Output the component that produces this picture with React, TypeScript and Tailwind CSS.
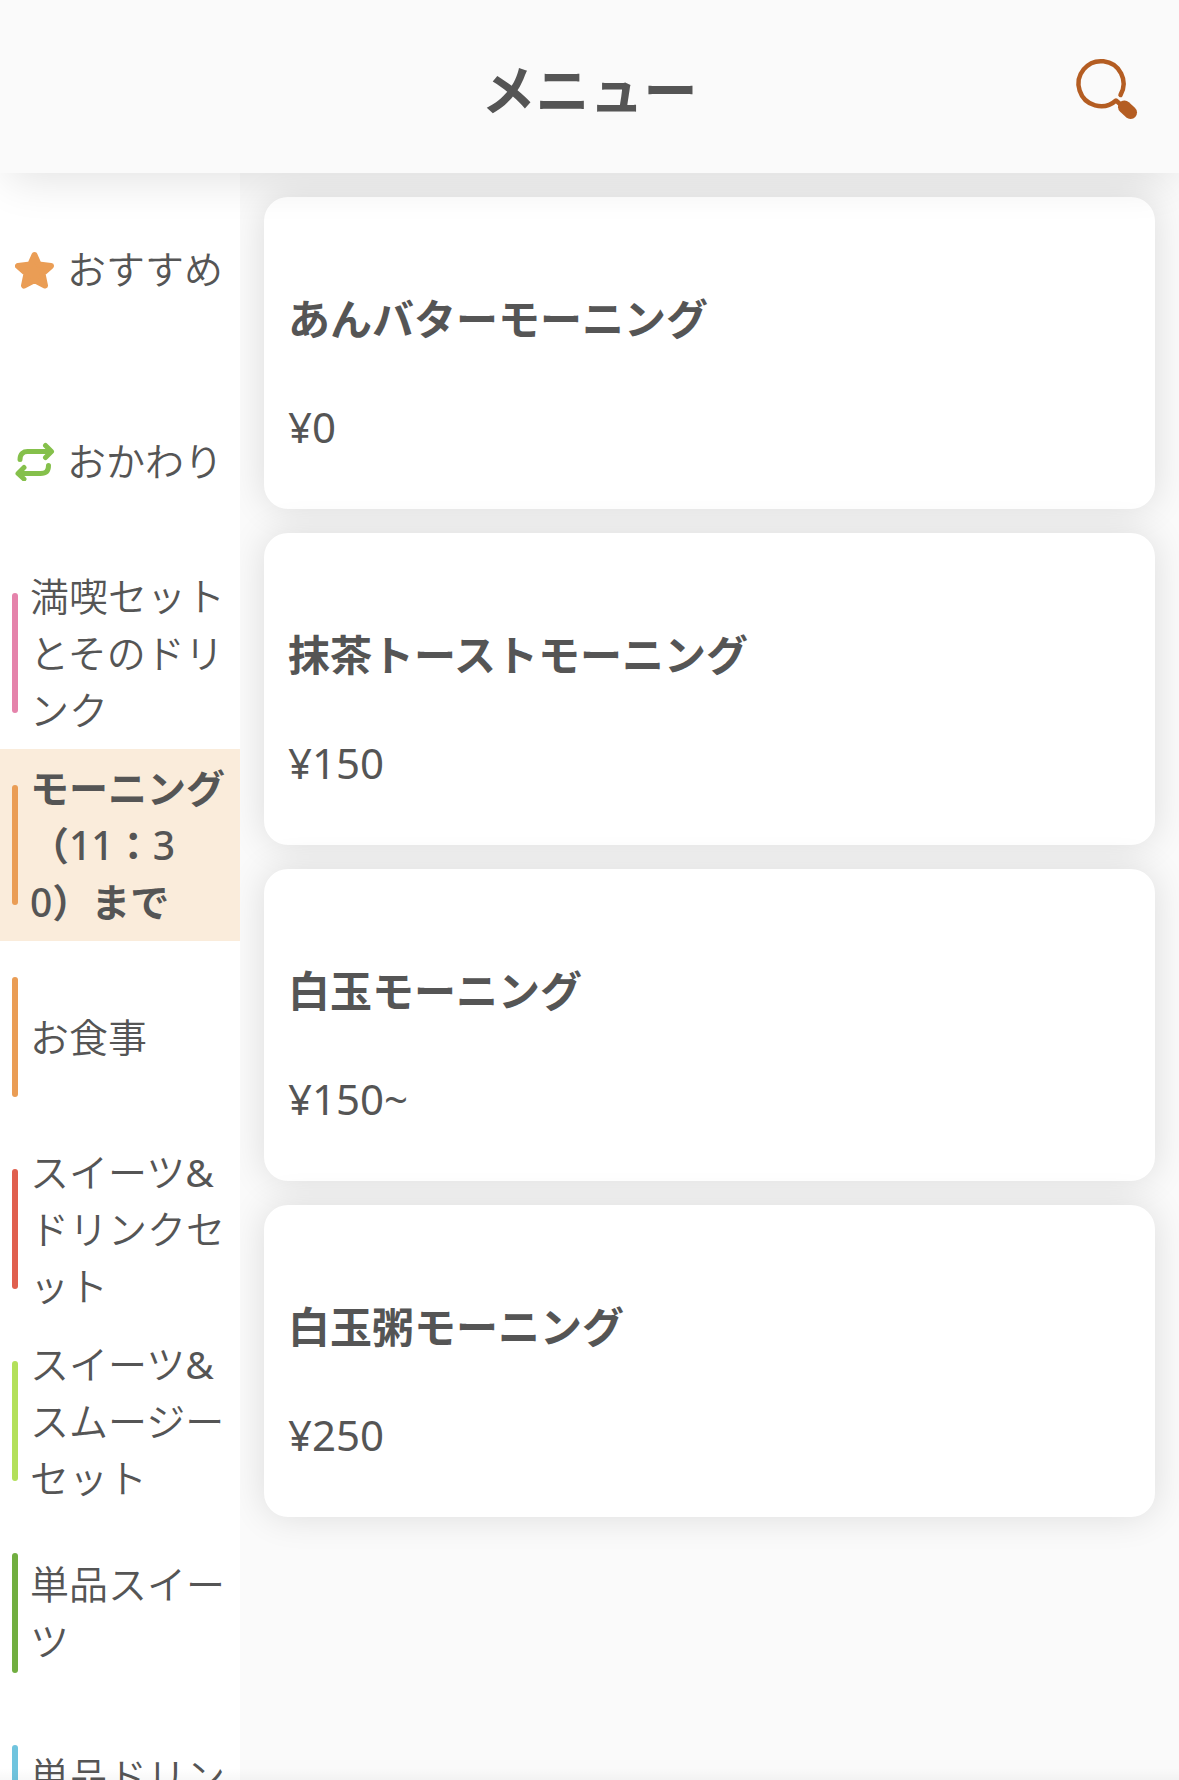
import type { ReactNode } from 'react';

const categories = [
  { name: 'おすすめ', icon: 'star' },
  { name: 'おかわり', icon: 'repeat' },
  { name: '満喫セットとそのドリンク', bar: 'bg-[#e583ab]' },
  { name: 'モーニング（11：30）まで', bar: 'bg-[#ea9d55]', active: true },
  { name: 'お食事', bar: 'bg-[#ea9d55]' },
  { name: 'スイーツ&ドリンクセット', bar: 'bg-[#e05f4e]' },
  { name: 'スイーツ&スムージーセット', bar: 'bg-[#b3e05a]' },
  { name: '単品スイーツ', bar: 'bg-[#71ae40]' },
  { name: '単品ドリンク', bar: 'bg-[#70c4de]' },
];

const items = [
  { name: 'あんバターモーニング', price: '¥0' },
  { name: '抹茶トーストモーニング', price: '¥150' },
  { name: '白玉モーニング', price: '¥150~' },
  { name: '白玉粥モーニング', price: '¥250' },
];

const icons: Record<string, ReactNode> = {
  star: (
    <svg viewBox="0 0 40 40" className="w-10 h-10 shrink-0" fill="#ea9d55" stroke="#ea9d55" strokeWidth="6" strokeLinejoin="round">
      <path d="M19.5 6 L23.700 15.500 L36 17 L27.500 24.500 L30 36.500 L19.500 31 L9 36.500 L11.500 24.500 L3 17 L15.300 15.500 Z" />
    </svg>
  ),
  repeat: (
    <svg viewBox="0 0 40 40" className="w-10 h-10 shrink-0" fill="none" stroke="#85c04b" strokeWidth="5" strokeLinecap="round" strokeLinejoin="round">
      <path d="M5 18.500 C5 12.500 8.500 10.500 12.500 10.500 H35" />
      <path d="M30.500 4.500 L36.500 10.500 L30.500 16.500" />
      <path d="M33.500 24.500 C33.500 30.500 30.500 32.500 25.500 32.500 H4.500" />
      <path d="M9 26.500 L3 32.500 L9 38" />
    </svg>
  ),
};

function SearchIcon() {
  return (
    <svg viewBox="0 0 72 72" className="w-18 h-18" fill="none" stroke="#b45d22" strokeLinecap="round">
      <path d="M52.5 41 A22.500 22.500 0 1 0 48 46.500 L52 50" strokeWidth="4.500" strokeLinejoin="round" />
      <path d="M56.500 53 L62.500 58.500" strokeWidth="13" />
    </svg>
  );
}

// Digits stay lighter than the kana in the selected category
function CategoryLabel({ name }: { name: string }) {
  return (
    <span className="flex-1 min-w-0 pb-0.5 break-all [text-spacing-trim:space-all]">
      {name.split(/(\d+)/).map((part, i) =>
        /^\d+$/.test(part) ? <span key={i} className="font-medium">{part}</span> : part
      )}
    </span>
  );
}

export default function App() {
  return (
    <div className="relative h-screen flex flex-col overflow-hidden bg-[#fafafa] text-[#555555] font-['Noto_Sans','Noto_Sans_CJK_JP',sans-serif]">
      <header className="relative z-10 shrink-0 grid grid-cols-[1fr_auto_1fr] items-center h-[173px] px-[39px] pt-1.5 bg-[#fafafa] shadow-[0_14px_42px_-8px_rgba(0,0,0,0.12)]">
        <h1 className="col-start-2 text-[54px] leading-[80px] font-bold">メニュー</h1>
        <button type="button" aria-label="検索" className="justify-self-end">
          <SearchIcon />
        </button>
      </header>

      <div className="flex flex-1 min-h-0">
        {/* Category list */}
        <nav className="relative z-[1] w-60 shrink-0 overflow-hidden bg-white">
          {categories.map((cat) => (
            <button
              key={cat.name}
              type="button"
              aria-current={cat.active}
              className={`flex items-center gap-3 w-full h-48 pr-3 text-left text-[39px] leading-[57px] ${cat.icon ? 'pl-[15px]' : 'pl-3'} ${cat.active ? 'bg-[#faecdb] font-bold' : "font-['Noto_Sans','Noto_Sans_CJK_JP_DemiLight','Noto_Sans_CJK_JP',sans-serif]"}`}
            >
              {cat.icon ? icons[cat.icon] : <span className={`w-[6px] h-[120px] shrink-0 rounded-full ${cat.bar}`} />}
              <CategoryLabel name={cat.name} />
            </button>
          ))}
        </nav>

        {/* Menu items */}
        <main className="flex-1 flex flex-col gap-6 p-6 overflow-hidden">
          {items.map((item) => (
            <article key={item.name} className="shrink-0 flex flex-col justify-end gap-12 h-[312px] px-6 pb-13 rounded-3xl bg-white shadow-[0_0_36px_rgba(0,0,0,0.12)]">
              <h2 className="text-[42px] leading-[60px] font-bold">{item.name}</h2>
              <p className="text-[42px] leading-[60px]">{item.price}</p>
            </article>
          ))}
        </main>
      </div>

      {/* Bottom edge shade */}
      <div className="pointer-events-none absolute inset-x-0 bottom-0 z-10 h-3 bg-linear-to-t from-black/3 to-transparent" />
    </div>
  );
}
